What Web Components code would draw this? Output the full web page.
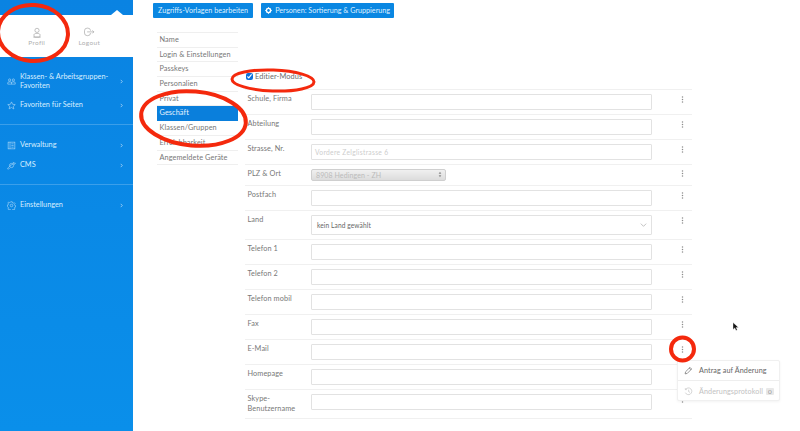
<!DOCTYPE html>
<html lang="de">
<head>
<meta charset="utf-8">
<title>Profil</title>
<style>
  html, body { margin: 0; height: 100%; background: #fff; overflow: hidden; }
  body { font: 8px Lato, "Open Sans", sans-serif; color: #6b6b6b; letter-spacing: .1px; }
</style>
</head>
<body>
<app-shell>
  <side-bar slot="side">
    <profile-link label="Profil" kind="user"></profile-link>
    <profile-link label="Logout" kind="logout"></profile-link>
    <nav-section slot="nav">
      <nav-item icon="group" tall>Klassen- &amp; Arbeitsgruppen-<br>Favoriten</nav-item>
      <nav-item icon="star">Favoriten für Seiten</nav-item>
    </nav-section>
    <nav-section slot="nav">
      <nav-item icon="book">Verwaltung</nav-item>
      <nav-item icon="cms">CMS</nav-item>
    </nav-section>
    <nav-section slot="nav" last>
      <nav-item icon="gear">Einstellungen</nav-item>
    </nav-section>
  </side-bar>

  <tool-bar slot="main">
    <blue-button>Zugriffs-Vorlagen bearbeiten</blue-button>
    <blue-button icon>Personen: Sortierung &amp; Gruppierung</blue-button>
  </tool-bar>

  <page-body slot="main">
    <tab-list slot="tabs">
      <tab-item>Name</tab-item>
      <tab-item>Login &amp; Einstellungen</tab-item>
      <tab-item>Passkeys</tab-item>
      <tab-item>Personalien</tab-item>
      <tab-item>Privat</tab-item>
      <tab-item active>Geschäft</tab-item>
      <tab-item>Klassen/Gruppen</tab-item>
      <tab-item>Erreichbarkeit</tab-item>
      <tab-item>Angemeldete Geräte</tab-item>
    </tab-list>
    <edit-form slot="form">
      <form-row label="Schule, Firma"></form-row>
      <form-row label="Abteilung"></form-row>
      <form-row label="Strasse, Nr." placeholder="Vordere Zelglistrasse 6"></form-row>
      <form-row label="PLZ &amp; Ort" type="place" value="8908 Hedingen - ZH"></form-row>
      <form-row label="Postfach"></form-row>
      <form-row label="Land" type="select" value="kein Land gewählt"></form-row>
      <form-row label="Telefon 1"></form-row>
      <form-row label="Telefon 2"></form-row>
      <form-row label="Telefon mobil"></form-row>
      <form-row label="Fax"></form-row>
      <form-row label="E-Mail"></form-row>
      <form-row label="Homepage"></form-row>
      <form-row label="Skype-Benutzername"></form-row>
    </edit-form>
  </page-body>

  <row-menu slot="over"></row-menu>
  <mark-up slot="over"></mark-up>
</app-shell>

<script>
const ICONS = {
  group: '<circle cx="3.5" cy="4" r="1.5"/><circle cx="8.5" cy="4" r="1.5"/><path d="M1 9.5V8a1.5 1.5 0 0 1 1.5-1.5h2A1.5 1.5 0 0 1 6 8a1.5 1.5 0 0 1 1.500-1.500h2A1.500 1.500 0 0 1 11 8v1.500zM6 8v1.500"/>',
  star: '<path d="M6 1.200l1.500 3.200 3.500.4-2.600 2.400.7 3.500L6 8.600l-3.100 1.900.7-3.500L1 4.800l3.500-.4z"/>',
  book: '<rect x="1.500" y="1.500" width="9" height="9"/><path d="M4 1.500v9M5.800 3.800h3M5.800 6h3M5.800 8.200h3"/>',
  cms: '<circle cx="6" cy="6" r="2.800"/><path d="M3.600 9.800C2 10.800 1 11 .8 10.600c-.3-.6 1.800-3 4.600-5s5.400-3.400 5.800-2.800c.2.400-.5 1.200-1.700 2.300"/><path d="M7.800 1.800l1.800.5"/>',
  gear: '<circle cx="6" cy="6" r="1.700"/><path d="M5 1h2l.3 1.500 1.100.5 1.300-.8 1.100 1.300-.8 1.300.4 1.100 1.100.3v1.700l-1.100.4-.4 1-.1.1.8 1.300-1.200 1.200-1.300-.8-1 .4-.3 1.400H5l-.3-1.400-1-.4-1.300.8-1.200-1.200.8-1.300-.4-1L.5 7V5.300l1.100-.3.400-1.100-.8-1.300 1.100-1.300 1.300.8 1.100-.5z"/>'
};

class AppShell extends HTMLElement {
  constructor() {
    super();
    this.attachShadow({ mode: 'open' }).innerHTML = `
      <style>
        :host { display: flex; position: relative; width: 800px; height: 431px; overflow: hidden; }
        .side { flex: 0 0 133px; }
        .main { flex: 1; min-width: 0; display: flex; flex-direction: column; }
      </style>
      <div class="side"><slot name="side"></slot></div>
      <div class="main"><slot name="main"></slot></div>
      <slot name="over"></slot>`;
  }
}

class SideBar extends HTMLElement {
  constructor() {
    super();
    this.attachShadow({ mode: 'open' }).innerHTML = `
      <style>
        :host { display: block; height: 431px; background: linear-gradient(180deg, #0a83e2 0%, #0a8fea 100%); color: #d8eeff; }
        .top { position: relative; height: 42px; background: #fff; display: flex; padding-left: 10.500px; }
        .top::before { content: ""; position: absolute; left: 111px; top: -5px; border: 6px solid transparent; border-top: 0; border-bottom: 5px solid #fff; }
        .gap { height: 15px; }
        .spacer { height: 11px; }
      </style>
      <div class="gap"></div>
      <div class="top"><slot></slot></div>
      <div class="spacer"></div>
      <slot name="nav"></slot>`;
  }
}

class ProfileLink extends HTMLElement {
  constructor() {
    super();
    const user = '<circle cx="8" cy="4.500" r="2.800"/><path d="M8 8.500c-2 0-3.500.5-4 1.500v2c0 1 .5 1.500 1 1.500h6c.5 0 1-.5 1-1.500v-2c-.5-1-2-1.500-4-1.500zM3 13.500h10"/>';
    const logout = '<path d="M10 5V4.500A3.500 3.500 0 0 0 6.500 1.500h-1A3.500 3.500 0 0 0 2 5v3a3.500 3.500 0 0 0 3.500 3.500h1A3.500 3.500 0 0 0 10 8"/><path d="M5.500 6.500H14.500M12.500 4.500l2 2-2 2"/>';
    const isUser = this.getAttribute('kind') === 'user';
    this.attachShadow({ mode: 'open' }).innerHTML = `
      <style>
        :host { display: flex; flex-direction: column; align-items: center; width: 52.500px; color: #b0b0b0; font-size: 6.500px; letter-spacing: .3px; line-height: 8px; }
        svg { width: 12px; height: 12px; margin: 12px 0 0; fill: none; stroke: #9a9a9a; stroke-width: .8; }
      </style>
      <svg viewBox="0 0 16 16">${isUser ? user : logout}</svg>
      <span>${this.getAttribute('label')}</span>`;
  }
}

class NavSection extends HTMLElement {
  constructor() {
    super();
    const last = this.hasAttribute('last');
    this.attachShadow({ mode: 'open' }).innerHTML = `
      <style>
        :host { display: block; padding: 0 0 9px; margin-bottom: 10px; border-bottom: ${last ? '0' : '1px solid rgba(255,255,255,.2)'}; }
      </style>
      <slot></slot>`;
  }
}

class NavItem extends HTMLElement {
  constructor() {
    super();
    const tall = this.hasAttribute('tall');
    this.attachShadow({ mode: 'open' }).innerHTML = `
      <style>
        :host { display: flex; align-items: center; min-height: ${tall ? 27 : 20}px; padding: 0 10.500px 0 7px; font-size: 7.300px; letter-spacing: 0; line-height: 8.500px; color: #d8eeff; }
        svg { flex: 0 0 9px; height: 9px; margin-right: 4px; fill: none; stroke: #b5dcf8; stroke-width: .8; }
        .t { flex: 1; }
      </style>
      <svg viewBox="0 0 12 12">${ICONS[this.getAttribute('icon')]}</svg>
      <span class="t"><slot></slot></span>
      <svg viewBox="0 0 4 6" style="flex:0 0 3px;height:5px;margin:0"><path d="M1 .8l2 2.200-2 2.200" stroke-width="1"/></svg>`;
  }
}

class ToolBar extends HTMLElement {
  constructor() {
    super();
    this.attachShadow({ mode: 'open' }).innerHTML = `
      <style>:host { display: flex; gap: 7.500px; height: 15px; padding: 3px 0 0 20px; }</style>
      <slot></slot>`;
  }
}

class BlueButton extends HTMLElement {
  constructor() {
    super();
    const hasIcon = this.hasAttribute('icon');
    const gear = hasIcon ? `<svg viewBox="0 0 12 12"><circle cx="6" cy="6" r="3.600" fill="none" stroke="#fff" stroke-width="2.400"/><path d="M5 .5h2v2H5zM5 9.500h2v2H5zM.5 5h2v2h-2zM9.500 5h2v2h-2zM2 3.300l1.300-1.300 1.300 1.300-1.300 1.300zM7.400 8.700l1.300-1.300 1.300 1.300-1.300 1.300zM2 8.700l1.300-1.300 1.300 1.300-1.300 1.300zM7.400 3.300l1.300-1.300 1.300 1.300-1.300 1.300z" fill="#fff"/></svg>` : '';
    this.attachShadow({ mode: 'open' }).innerHTML = `
      <style>
        :host { display: inline-flex; align-items: center; gap: 3.500px; height: 15px; padding: 0 ${hasIcon ? 4 : 5}px; background: #0a87e2; color: #dff0ff; font-size: 7.200px; letter-spacing: 0; border-radius: 1px; white-space: nowrap; }
        svg { width: 7px; height: 7px; }
      </style>${gear}<slot></slot>`;
  }
}

class PageBody extends HTMLElement {
  constructor() {
    super();
    this.attachShadow({ mode: 'open' }).innerHTML = `
      <style>
        :host { display: flex; align-items: flex-start; padding-left: 24px; }
        .tabs { flex: 0 0 81px; margin-top: 14px; }
        .form { flex: 0 0 446px; margin-left: 8px; }
      </style>
      <div class="tabs"><slot name="tabs"></slot></div>
      <div class="form"><slot name="form"></slot></div>`;
  }
}

class TabList extends HTMLElement {
  constructor() {
    super();
    this.attachShadow({ mode: 'open' }).innerHTML = `
      <style>:host { display: block; border-top: 1px solid #efefef; }</style>
      <slot></slot>`;
  }
}

class TabItem extends HTMLElement {
  constructor() {
    super();
    const on = this.hasAttribute('active');
    this.attachShadow({ mode: 'open' }).innerHTML = `
      <style>
        :host { display: block; box-sizing: border-box; height: 14.700px; line-height: 13.700px; padding-left: 2.500px;
          border-bottom: 1px solid ${on ? '#0a7fdc' : '#efefef'}; background: ${on ? '#0a7fdc' : 'transparent'};
          color: ${on ? '#e8f4ff' : '#777'}; font-size: 7.300px; white-space: nowrap; }
      </style>
      <slot></slot>`;
  }
}

class EditForm extends HTMLElement {
  constructor() {
    super();
    this.attachShadow({ mode: 'open' }).innerHTML = `
      <style>
        :host { display: block; margin-left: -1px; }
        .mode { display: flex; align-items: center; gap: 2px; height: 15px; margin: 51px 0 4.500px; padding-left: 1px; font-size: 7.400px; color: #6c6c6c; }
        input { width: 7px; height: 7px; margin: 0; accent-color: #0a6fdc; }
        .rows { border-top: 1px solid #f0f0f0; }
      </style>
      <label class="mode"><input type="checkbox" checked>Editier-Modus</label>
      <div class="rows"><slot></slot></div>`;
  }
}

class FormRow extends HTMLElement {
  constructor() {
    super();
    const type = this.getAttribute('type') || 'text';
    const value = this.getAttribute('value') || '';
    const ph = this.getAttribute('placeholder');
    let field = `<div class="box">${ph ? `<span class="ph">${ph}</span>` : ''}</div>`;
    if (type === 'place') {
      field = `<div class="place"><span>${value}</span><svg viewBox="0 0 6 10" width="4" height="7"><path d="M3 1l2 3H1zM3 9L1 6h4z" fill="#8a8a8a"/></svg></div>`;
    } else if (type === 'select') {
      field = `<div class="box sel"><span>${value}</span><svg viewBox="0 0 10 6" width="7" height="4"><path d="M1 1l4 4 4-4" fill="none" stroke="#999" stroke-width=".9"/></svg></div>`;
    }
    const label = this.getAttribute('label').replace('Skype-', 'Skype-<br>');
    this.attachShadow({ mode: 'open' }).innerHTML = `
      <style>
        :host { display: grid; grid-template-columns: 66px 341px 1fr; align-items: start; box-sizing: border-box;
          padding: 4px 0; border-bottom: 1px solid #f0f0f0; font-size: 7.300px; color: #777; }
        .l { line-height: 10px; padding: 0 0 0 2.500px; }
        .box { box-sizing: border-box; height: 16px; border: 1px solid #e2e2e2; border-radius: 1px; display: flex; align-items: center; padding: 0 5px 0 3px; background: #fff; }
        .sel { height: 20px; justify-content: space-between; color: #666; font-size: 6.600px; padding-left: 5px; padding-right: 4px; }
        .ph { color: #cdcdcd; font-size: 6.700px; letter-spacing: .3px; }
        .place { box-sizing: border-box; width: 135px; height: 12px; border: 1px solid #cfcfcf; border-radius: 2px; display: flex; justify-content: space-between; align-items: center; padding: 0 3px 0 4px;
          background: linear-gradient(#f0f0f0, #dcdcdc); color: #bbb; font-size: 7px; }
        kebab-button { margin-top: ${type === 'place' ? 1 : 2.500}px; }
      </style>
      <div class="l">${label}</div>
      ${field}
      <kebab-button></kebab-button>`;
  }
}

class KebabButton extends HTMLElement {
  constructor() {
    super();
    this.attachShadow({ mode: 'open' }).innerHTML = `
      <style>:host { display: block; padding-left: 29px; line-height: 0; } svg { width: 3px; height: 7px; }</style>
      <svg viewBox="0 0 3 7" fill="#8c8c8c"><circle cx="1.500" cy=".9" r=".75"/><circle cx="1.500" cy="3.500" r=".75"/><circle cx="1.500" cy="6.100" r=".75"/></svg>`;
  }
}

class RowMenu extends HTMLElement {
  constructor() {
    super();
    this.attachShadow({ mode: 'open' }).innerHTML = `
      <style>
        :host { position: absolute; left: 677px; top: 360px; width: 103px; height: 41px; box-sizing: border-box; background: #fff;
          border: 1px solid #f0f0f0; border-radius: 2px; box-shadow: 0 1px 3px rgba(0,0,0,.05); font-size: 7.200px; color: #666; z-index: 2; }
        .i { display: flex; align-items: center; height: 19px; padding-left: 6px; gap: 6px; white-space: nowrap; }
        .i + .i { border-top: 1px solid #eee; color: #c2c2c2; height: 20px; }
        svg { width: 9px; height: 9px; fill: none; stroke: currentColor; stroke-width: .9; flex: none; }
        b { font-weight: 400; background: #e8e8e8; color: #999; border-radius: 1px; padding: 0 2px; font-size: 6.400px; margin-left: -3px; }
      </style>
      <div class="i"><svg viewBox="0 0 12 12"><path d="M1.500 10.500l.6-2.800 5.900-5.900 2.200 2.200-5.900 5.900zM7 2.800l2.200 2.200"/></svg><span>Antrag auf Änderung</span></div>
      <div class="i"><svg viewBox="0 0 12 12"><path d="M2.200 3.200A4.500 4.500 0 1 1 1.800 7.500M1.800 1.500v2h2M6.200 3.500V6.200l1.800 1"/></svg><span>Änderungsprotokoll</span><b>0</b></div>`;
  }
}

// rote Markierungen und Mauszeiger liegen frei über dem Screenshot
class MarkUp extends HTMLElement {
  constructor() {
    super();
    this.attachShadow({ mode: 'open' }).innerHTML = `
      <style>:host { position: absolute; inset: 0; z-index: 3; pointer-events: none; } svg { display: block; }</style>
      <svg width="800" height="431" fill="none" stroke="#f4290d" stroke-width="4">
        <ellipse cx="33" cy="33" rx="35" ry="28" transform="rotate(4 33 33)"/>
        <ellipse cx="193.500" cy="118.500" rx="52.500" ry="27" transform="rotate(5 193.500 118.500)"/>
        <ellipse cx="273" cy="80.500" rx="41" ry="10.500" transform="rotate(2 273 80.500)" stroke-width="3"/>
        <circle cx="682.500" cy="349" r="11.500"/>
        <path d="M733 322.500v7l1.800-1.600 1.200 2.700 1.300-.6-1.200-2.600h2.400z" fill="#111" stroke="#fff" stroke-width=".4"/>
      </svg>`;
  }
}

customElements.define('app-shell', AppShell);
customElements.define('side-bar', SideBar);
customElements.define('profile-link', ProfileLink);
customElements.define('nav-section', NavSection);
customElements.define('nav-item', NavItem);
customElements.define('tool-bar', ToolBar);
customElements.define('blue-button', BlueButton);
customElements.define('page-body', PageBody);
customElements.define('tab-list', TabList);
customElements.define('tab-item', TabItem);
customElements.define('edit-form', EditForm);
customElements.define('form-row', FormRow);
customElements.define('kebab-button', KebabButton);
customElements.define('row-menu', RowMenu);
customElements.define('mark-up', MarkUp);
</script>
</body>
</html>
